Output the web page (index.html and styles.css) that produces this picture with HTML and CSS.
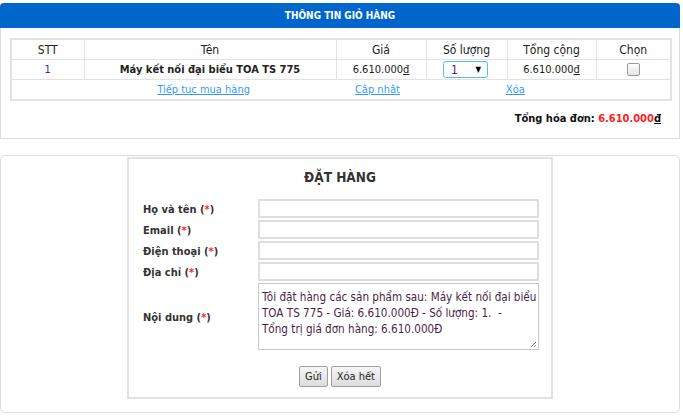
FILE: index.html
```html
<!DOCTYPE html>
<html lang="vi">
<head>
<meta charset="utf-8">
<title>Giỏ hàng</title>
<link rel="stylesheet" href="styles.css">
</head>
<body>
<div class="cart">
  <div class="cart-head">THÔNG TIN GIỎ HÀNG</div>
  <div class="cart-body">
    <table class="cart-table">
      <colgroup>
        <col class="c-stt"><col class="c-name"><col class="c-price"><col class="c-qty"><col class="c-total"><col class="c-pick">
      </colgroup>
      <tr class="th">
        <td>STT</td><td>Tên</td><td>Giá</td><td>Số lượng</td><td>Tổng cộng</td><td>Chọn</td>
      </tr>
      <tr>
        <td class="num">1</td>
        <td class="pname">Máy kết nối đại biểu TOA TS 775</td>
        <td>6.610.000<u>đ</u></td>
        <td><span class="qty"><span class="qv">1</span><span class="arr">▼</span></span></td>
        <td>6.610.000<u>đ</u></td>
        <td><span class="chk"></span></td>
      </tr>
      <tr>
        <td colspan="6" class="links">
          <a href="#" class="l1">Tiếp tuc mua hàng</a><a href="#" class="l2">Câp nhât</a><a href="#" class="l3">Xóa</a>
        </td>
      </tr>
    </table>
    <div class="grand">Tổng hóa đơn: <span class="red">6.610.000<u>đ</u></span></div>
  </div>
</div>

<div class="order">
  <div class="order-box">
    <div class="order-title">ĐẶT HÀNG</div>
    <div class="form">
      <label>Họ và tên (<span class="req">*</span>)</label><div class="inp"></div>
      <label>Email (<span class="req">*</span>)</label><div class="inp"></div>
      <label>Điện thoại (<span class="req">*</span>)</label><div class="inp"></div>
      <label>Địa chỉ (<span class="req">*</span>)</label><div class="inp"></div>
      <label class="mid">Nội dung (<span class="req">*</span>)</label>
      <div class="ta">Tôi đặt hàng các sản phẩm sau: Máy kết nối đại biểu TOA TS 775 - Giá: 6.610.000Đ - Số lượng: 1.&nbsp; - Tổng&nbsp;trị giá đơn hàng: 6.610.000Đ
        <svg class="grip" width="7" height="7" viewBox="0 0 7 7"><path d="M6 1 L1 6 M6 4 L4 6" stroke="#888" stroke-width="1"/></svg>
      </div>
    </div>
    <div class="btns"><span class="btn">Gửi</span><span class="btn">Xóa hết</span></div>
  </div>
</div>
</body>
</html>
```

FILE: styles.css
```css
html, body { margin: 0; padding: 0; background: #fff; }
body {
  font-family: "DejaVu Sans Condensed", "DejaVu Sans", sans-serif;
  font-size: 11px;
  color: #222;
}
.cart {
  margin: 3px 3px 0 0;
  border: 1px solid #ddd;
  border-top: none;
  border-radius: 4px 4px 0 0;
  height: 136px;
  box-sizing: border-box;
}
.cart-head {
  background: #0066cc;
  color: #fff;
  font-weight: bold;
  font-size: 10px;
  text-align: center;
  height: 25px;
  line-height: 25px;
  border-radius: 4px 4px 0 0;
  margin: 0 -1px;
}
.cart-body { padding: 10px 9px 0 9px; }
.cart-table {
  width: 660px;
  border-collapse: collapse;
  border: 2px solid #e2e2e2;
  table-layout: fixed;
}
.c-stt { width: 73px; }
.c-name { width: 252px; }
.c-price { width: 90px; }
.c-qty { width: 81px; }
.c-total { width: 89px; }
.c-pick { width: 75px; }
.cart-table td {
  border: 1px solid #e2e2e2;
  height: 19px;
  padding: 0;
  text-align: center;
  vertical-align: middle;
  font-size: 11px;
}
.th td { font-size: 12px; color: #222; }
.num { color: #551a8b; }
.pname { font-weight: bold; }
.qty {
  display: inline-flex;
  align-items: center;
  justify-content: space-between;
  width: 45px;
  height: 17px;
  box-sizing: border-box;
  border: 1px solid #5bc0de;
  border-radius: 3px;
  padding: 0 6px 0 7px;
  vertical-align: middle;
  margin-left: -2px;
}
.qv { color: #551a8b; font-size: 12px; }
.arr { font-size: 8px; color: #000; }
.chk {
  display: inline-block;
  width: 11px;
  height: 11px;
  border: 1px solid #999;
  border-radius: 2px;
  background: linear-gradient(#fff, #e4e4e4);
  vertical-align: middle;
}
.links a { color: #3399ff; text-decoration: underline; font-size: 11px; }
.links .l2 { margin-left: 105px; }
.links .l3 { margin-left: 106px; }
.grand {
  text-align: right;
  font-weight: bold;
  font-size: 11px;
  padding: 11px 9px 0 0;
  color: #111;
}
.red { color: #ff2020; }
.grand u { color: #111; }

.order {
  margin: 16px 3px 0 0;
  height: 258px;
  box-sizing: border-box;
  border: 1px solid #ddd;
  border-radius: 5px;
  display: flex;
  justify-content: center;
  padding-top: 1px;
}
.order-box {
  width: 426px;
  height: 242px;
  box-sizing: border-box;
  border: 2px solid #e2e2e2;
  padding: 0 14px 0 14px;
}
.order-title {
  text-align: center;
  font-weight: bold;
  font-size: 13.5px;
  color: #333;
  height: 40px;
  line-height: 37px;
}
.form {
  display: grid;
  grid-template-columns: 115px 281px;
  row-gap: 2px;
}
.form label {
  font-weight: bold;
  font-size: 11px;
  color: #333;
  display: flex;
  align-items: center;
  padding-top: 1px;
}
.req { color: #ff2a2a; }
.inp {
  height: 19px;
  box-sizing: border-box;
  border: 2px solid #dedede;
}
.ta {
  position: relative;
  height: 67px;
  box-sizing: border-box;
  border: 1px solid #c8c8c8;
  padding: 5px 0 0 3px;
  color: #4a1f45;
  font-size: 11.6px;
  line-height: 16px;
}
.grip { position: absolute; right: 1px; bottom: 1px; }
.btns {
  display: flex;
  justify-content: center;
  gap: 3px;
  margin-top: 16px;
}
.btn {
  display: inline-block;
  height: 21px;
  line-height: 19px;
  box-sizing: border-box;
  padding: 0 5px;
  border: 1px solid #a0a0a0;
  border-radius: 2px;
  background: linear-gradient(#f6f6f6, #dcdcdc);
  font-size: 11px;
  color: #222;
}
```
